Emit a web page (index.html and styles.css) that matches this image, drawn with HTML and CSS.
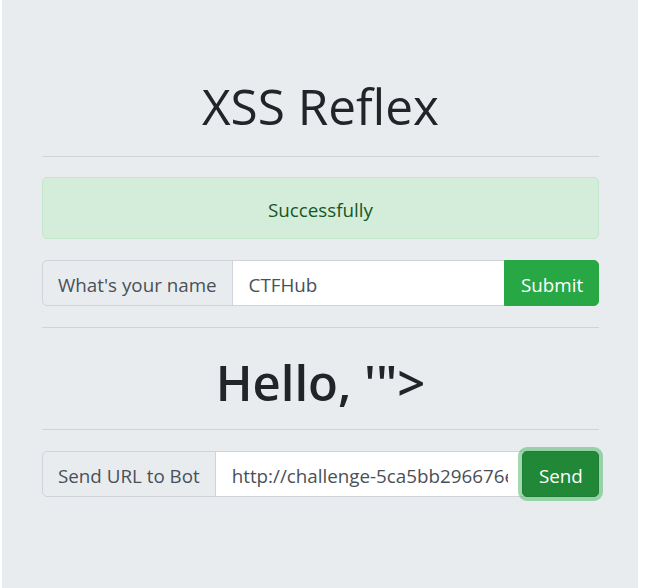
FILE: index.html
```html
<!DOCTYPE html>
<html lang="en">
<head>
<meta charset="utf-8">
<title>XSS Reflex</title>
<link rel="stylesheet" href="styles.css">
</head>
<body>
<main class="jumbotron">
  <h1 class="title">XSS Reflex</h1>
  <hr class="rule rule-top">
  <div class="alert">Successfully</div>
  <form class="input-group group-name">
    <span class="group-label">What's your name</span>
    <input class="group-input" type="text" name="name" value="CTFHub">
    <button class="btn btn-submit" type="button">Submit</button>
  </form>
  <hr class="rule rule-mid">
  <h2 class="hello">Hello, '"&gt;</h2>
  <hr class="rule rule-bottom">
  <form class="input-group group-url">
    <span class="group-label">Send URL to Bot</span>
    <input class="group-input" type="text" name="url" value="http://challenge-5ca5bb296676e1a2.sandbox.ctfhub.com:10800/">
    <button class="btn btn-send" type="button">Send</button>
  </form>
</main>
</body>
</html>
```
FILE: styles.css
```css
* { box-sizing: border-box; }

body {
  margin: 0;
  background: #fff;
  font-family: "Open Sans", "Noto Sans", sans-serif;
  color: #212529;
}

.jumbotron {
  margin-left: 2px;
  width: 636px;
  min-height: 588px;
  background: #e9ecef;
  padding: 0 39px 40px 40px;
  display: flex;
  flex-direction: column;
}

.title {
  margin: 76px 0 0;
  font-size: 49.5px;
  line-height: 60px;
  font-weight: 400;
  text-align: center;
  color: #212529;
}

.rule {
  margin: 0;
  border: 0;
  border-top: 1px solid rgba(0, 0, 0, 0.1);
  height: 0;
}

.rule-top { margin-top: 20px; }

.alert {
  margin-top: 20px;
  height: 62px;
  padding-top: 3px;
  border: 1px solid #c3e6cb;
  border-radius: 5px;
  background: #d4edda;
  color: #155724;
  font-size: 18.8px;
  display: flex;
  align-items: center;
  justify-content: center;
}

.input-group {
  display: flex;
  height: 46px;
  margin: 21px 0 0;
  font-size: 18.8px;
}

.group-label {
  display: flex;
  align-items: center;
  padding: 3px 15px 0;
  background: #e9ecef;
  border: 1px solid #ced4da;
  border-radius: 5px 0 0 5px;
  color: #495057;
  white-space: nowrap;
}

.group-input {
  flex: 1;
  min-width: 0;
  margin-left: -1px;
  padding: 3px 16px 0;
  border: 1px solid #ced4da;
  background: #fff;
  color: #495057;
  font: inherit;
  outline: none;
}

.btn {
  position: relative;
  z-index: 2;
  margin-left: -1px;
  padding: 3px 16px 0;
  border: 1px solid #28a745;
  border-radius: 0 5px 5px 0;
  background: #28a745;
  color: #fff;
  font: inherit;
}

.btn-submit { width: 95px; }

.btn-send {
  width: 77px;
  background: #218838;
  border-color: #1e7e34;
  border-radius: 5px;
  box-shadow: 0 0 0 4px rgba(72, 180, 97, 0.5);
  margin-left: -3px;
}

.rule-mid { margin-top: 21px; }

.hello {
  margin: 24px 0 0;
  font-size: 49px;
  line-height: 60px;
  font-weight: 600;
  text-align: center;
  color: #212529;
}

.rule-bottom { margin-top: 17px; }
```
